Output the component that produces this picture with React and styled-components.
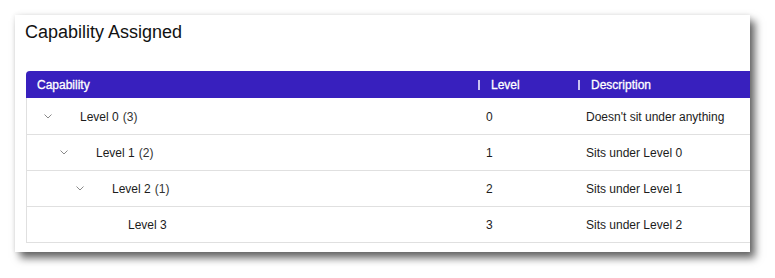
import React from 'react';
import styled, { createGlobalStyle } from 'styled-components';

const GlobalStyle = createGlobalStyle`
  html, body {
    margin: 0;
    background: #ffffff;
    font-family: "Liberation Sans", Arial, sans-serif;
  }
`;

const Page = styled.div`
  padding: 15px 0 26px 15px;
  min-height: 278px;
  box-sizing: border-box;
`;

const Card = styled.div`
  width: 735px;
  height: 237px;
  background: #fff;
  overflow: hidden;
  box-sizing: border-box;
  padding: 6px 0 0 10px;
  box-shadow: 5px 6px 8px rgba(0, 0, 0, 0.6), 0 0 5px rgba(0, 0, 0, 0.1);
`;

const Title = styled.h2`
  margin: 0;
  font-size: 18px;
  line-height: 22px;
  font-weight: 400;
  color: #111;
`;

const Table = styled.div`
  margin: 28px 0 0 1px;
  width: 820px;
  border-left: 1px solid #e0e0e0;
  border-top-left-radius: 4px;
`;

const HeadRow = styled.div`
  display: grid;
  grid-template-columns: 447px 100px 1fr;
  height: 27px;
  margin-bottom: 1px;
  background: #3820be;
  border-top-left-radius: 4px;
  margin-left: -1px;
  color: #fff;
  font-size: 12px;
  -webkit-text-stroke: 0.3px #fff;
`;

const HeadCell = styled.div`
  display: flex;
  align-items: center;
  padding-left: ${p => (p.first ? '11px' : '5px')};
`;

const Sep = styled.span`
  width: 2px;
  height: 10px;
  background: #c9c2f0;
  margin-right: 11px;
`;

const Row = styled.div`
  display: grid;
  grid-template-columns: 446px 100px 1fr;
  height: 36px;
  border-bottom: 1px solid #e0e0e0;
  box-sizing: border-box;
  font-size: 12px;
  color: #1c1c1c;
`;

const Cell = styled.div`
  display: flex;
  align-items: center;
  padding-left: ${p => p.indent ?? 13}px;
`;

const Toggle = styled.span`
  width: 8px;
  height: 8px;
  display: inline-flex;
  align-items: center;
  margin-right: 28px;
`;

const Count = styled.span`
  color: #333;
  margin-left: 4px;
`;

const Chevron = () => (
  <svg width="8" height="5" viewBox="0 0 8 5">
    <path d="M0.5 0.5 L4 4 L7.5 0.5" fill="none" stroke="#8a8a8a" strokeWidth="1" />
  </svg>
);

const rows = [
  { name: 'Level 0', count: 3, level: 0, desc: "Doesn't sit under anything" },
  { name: 'Level 1', count: 2, level: 1, desc: 'Sits under Level 0' },
  { name: 'Level 2', count: 1, level: 2, desc: 'Sits under Level 1' },
  { name: 'Level 3', count: null, level: 3, desc: 'Sits under Level 2' },
];

export default function App() {
  return (
    <>
      <GlobalStyle />
      <Page>
        <Card>
          <Title>Capability Assigned</Title>
          <Table>
            <HeadRow>
              <HeadCell first>Capability</HeadCell>
              <HeadCell><Sep />Level</HeadCell>
              <HeadCell><Sep />Description</HeadCell>
            </HeadRow>
            {rows.map(r => (
              <Row key={r.name}>
                <Cell indent={17 + r.level * 16}>
                  <Toggle>{r.count !== null && <Chevron />}</Toggle>
                  {r.name}
                  {r.count !== null && <Count>({r.count})</Count>}
                </Cell>
                <Cell>{r.level}</Cell>
                <Cell>{r.desc}</Cell>
              </Row>
            ))}
          </Table>
        </Card>
      </Page>
    </>
  );
}
